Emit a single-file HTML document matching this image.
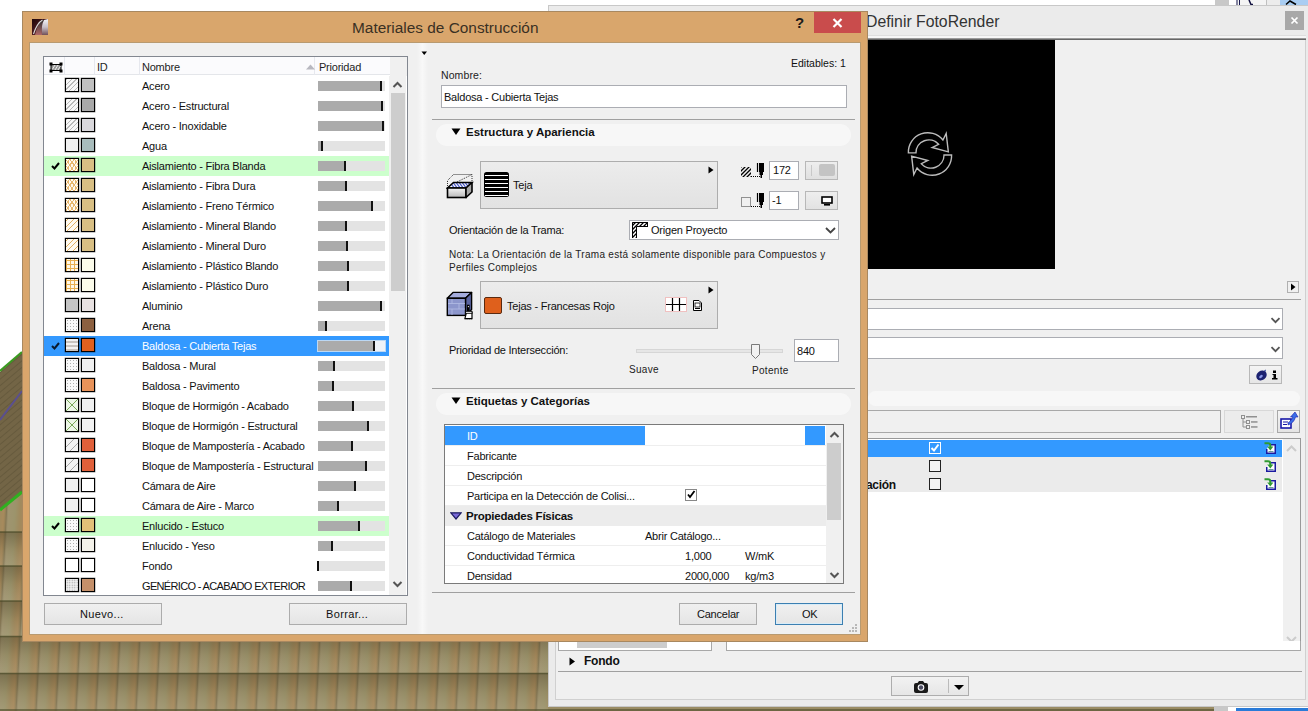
<!DOCTYPE html><html><head><meta charset="utf-8"><style>
*{margin:0;padding:0;box-sizing:border-box}
html,body{width:1308px;height:711px;overflow:hidden;background:#fff;position:relative;font-family:"Liberation Sans",sans-serif;font-size:11px;color:#000}
div{position:absolute}
.t{white-space:nowrap;line-height:14px;letter-spacing:-.22px}
.sw{width:14px;height:14px;border:1px solid #000;box-shadow:0 0 0 0.4px rgba(0,0,0,.5)}
.bar{width:67px;height:10px;background:#e3e3e3}
.bar i{position:absolute;left:0;top:0;height:10px;background:#ababab;display:block}
.bar b{position:absolute;top:0;width:1.6px;height:10px;background:#111;display:block}
.btn{border:1px solid #acacac;background:linear-gradient(#f0f0f0,#e5e5e5);border-radius:0}
.inp{background:#fff;border:1px solid #abadb3}
</style></head><body><svg width="548" height="711" style="position:absolute;left:0;top:0">
<defs>
<linearGradient id="tg" x1="0" x2="1" y1="0" y2="0">
<stop offset="0" stop-color="#7c6e4c"/><stop offset=".1" stop-color="#a09470"/><stop offset=".45" stop-color="#9c946c"/><stop offset=".7" stop-color="#a08a5e"/><stop offset=".9" stop-color="#a88a5c"/><stop offset="1" stop-color="#8e7e56"/>
</linearGradient>
<pattern id="tile" x="12.8" y="0" width="20" height="37" patternUnits="userSpaceOnUse" patternTransform="skewX(-3)">
<rect width="20" height="37" fill="url(#tg)"/>
</pattern>
<pattern id="hip" width="5" height="5" patternUnits="userSpaceOnUse" patternTransform="rotate(-40)">
<rect width="5" height="5" fill="#736546"/>
<rect width="5" height="1" fill="#665a3d"/>
</pattern>
</defs>
<rect x="0" y="0" width="548" height="711" fill="#fff"/>
<rect x="0" y="480" width="548" height="231" fill="url(#tile)"/>
<linearGradient id="rs" x1="0" x2="0" y1="0" y2="1"><stop offset="0" stop-color="#3a3018" stop-opacity=".35"/><stop offset=".5" stop-color="#3a3018" stop-opacity=".08"/><stop offset="1" stop-color="#fff" stop-opacity=".06"/></linearGradient>
<rect x="0" y="532" width="548" height="34" fill="url(#rs)"/><rect x="0" y="566" width="548" height="35" fill="url(#rs)"/><rect x="0" y="601" width="548" height="35.5" fill="url(#rs)"/><rect x="0" y="636.5" width="548" height="37" fill="url(#rs)"/><rect x="0" y="673.5" width="548" height="37" fill="url(#rs)"/>
<g fill="none" stroke="#4a4a28" stroke-width="1.6" opacity=".75">
<path d="M0 532H548M0 566H548M0 601H548M0 636.5H548M0 673.5H548M0 710H548"/>
</g>
<polygon points="0,372 22,352 22,492 0,510" fill="url(#hip)"/>
<line x1="0" y1="371" x2="22" y2="352" stroke="#3a9a20" stroke-width="2.2"/>
<line x1="0" y1="420" x2="22" y2="391" stroke="#5a4f90" stroke-width="2"/>
<line x1="0" y1="510" x2="22" y2="492" stroke="#30b020" stroke-width="3"/>
</svg><svg width="760" height="11" style="position:absolute;left:548px;top:700px"><rect width="760" height="11" fill="#9a8c64"/><path d="M0 10H760" stroke="#4a4a28" stroke-width="1.6" opacity=".75"/></svg><div style="left:1214px;top:705px;width:14px;height:6px;background:#c8c8c8"></div><div style="left:1228px;top:705px;width:80px;height:6px;background:#fff"></div><div style="left:1236px;top:708px;width:72px;height:3px;background:#2a7bd8"></div><div style="left:1215px;top:0px;width:14px;height:5px;background:#c8c8c8"></div><div style="left:1280px;top:0px;width:28px;height:5px;background:#a9cdf2"></div><div style="left:1266px;top:0px;width:14px;height:5px;background:#ececec;border-left:1px solid #c0c0c0"></div><div style="left:1236px;top:0px;width:30px;height:5px;background:#f4f4f4"></div><svg width="72" height="6" style="position:absolute;left:1236px;top:0"><path d="M3.5 0V5M1 0V5" stroke="#1a1a50" stroke-width="1"/><path d="M13 0L15 4.5H17" stroke="#101040" stroke-width="1.5" fill="none"/><path d="M50 4.5L54 1L60 4.5" stroke="#000" stroke-width="1.5" fill="none"/></svg><div style="left:548px;top:5px;width:760px;height:702px;background:#ebebeb;border:1px solid #c8c8c8;border-right:none"></div><div class="t" style="left:866px;top:13px;font-size:15.8px;line-height:18px;color:#333;letter-spacing:0">Definir FotoRender</div><div style="left:1285px;top:11px;width:19px;height:19px;background:#a8a8a8"><svg width="19" height="19" style="position:absolute;left:0;top:0"><path d="M6.5 6.5L12.5 12.5M12.5 6.5L6.5 12.5" stroke="#fff" stroke-width="1.7"/></svg></div><div style="left:555px;top:38px;width:751px;height:662px;background:#f0f0f0;border:1px solid #d0d0d0;border-top:2px solid #777"></div><div style="left:555px;top:35px;width:751px;height:1px;background:#dedede"></div><div style="left:555px;top:36px;width:751px;height:2px;background:#f6f6f6"></div><div style="left:555px;top:38px;width:751px;height:1px;background:#9a9a9a"></div><div style="left:555px;top:39px;width:751px;height:1px;background:#666"></div><div style="left:868px;top:40px;width:187px;height:229px;background:#000"></div><svg width="50" height="50" style="position:absolute;top:130px;left:905px"><g fill="none" stroke="#bbb" stroke-width="1.3" transform="translate(25.2 24.2) scale(1.08) translate(-25.2 -25.2)"><path d="M5 24 A18 18 0 0 1 37 12 L40 6 L42 23 L27 19 L33 16 A12 12 0 0 0 12 24 Z"/><path d="M45 26 A18 18 0 0 1 13 38 L10 44 L8 27 L23 31 L17 34 A12 12 0 0 0 38 26 Z"/></g></svg><div style="left:1287px;top:281px;width:12px;height:12px;border:1px solid #b0b0b0;background:#f0f0f0"><svg width="10" height="10" style="position:absolute;left:0;top:0"><path d="M3 1.5L7.5 5L3 8.5Z" fill="#000"/></svg></div><div style="left:868px;top:299px;width:433px;height:1px;background:#a0a0a0"></div><div style="left:860px;top:308px;width:423px;height:22px;background:#fff;border:1px solid #abadb3"><svg width="11" height="7" style="position:absolute;left:409px;top:8px"><path d="M1.5 1.2L5.5 5.2L9.5 1.2" fill="none" stroke="#555" stroke-width="1.8"/></svg></div><div style="left:860px;top:337px;width:423px;height:22px;background:#fff;border:1px solid #abadb3"><svg width="11" height="7" style="position:absolute;left:409px;top:8px"><path d="M1.5 1.2L5.5 5.2L9.5 1.2" fill="none" stroke="#555" stroke-width="1.8"/></svg></div><div style="left:1249px;top:365px;width:33px;height:19px;border:1px solid #b8b8b8;background:linear-gradient(#f4f4f4,#e6e6e6)"><svg width="33" height="19" style="position:absolute;left:0;top:0"><ellipse cx="11.5" cy="9.5" rx="5.5" ry="4.6" transform="rotate(-35 11.5 9.5)" fill="#1c2270"/><ellipse cx="11" cy="10.5" rx="2" ry="1.3" transform="rotate(-35 11 10.5)" fill="#8a98e8"/><path d="M14 4.5L16 3.5L15.5 6Z" fill="#3a4aa0"/><rect x="23" y="4.5" width="3" height="2.5" fill="#000"/><rect x="23.5" y="8" width="2.5" height="4.5" fill="#000"/><rect x="22" y="12" width="5.5" height="1.5" fill="#000"/><rect x="22.5" y="8" width="1.5" height="1" fill="#000"/></svg></div><div style="left:868px;top:391px;width:432px;height:15px;background:#f7f7f7;border-radius:8px"></div><div style="left:860px;top:410px;width:361px;height:23px;background:#f0f0f0;border:1px solid #a8a8a8"></div><div style="left:1224px;top:410px;width:50px;height:23px;border:1px solid #d8d8d8;background:#ececec"><svg width="50" height="23" style="position:absolute;left:-1px;top:-1px"><g fill="#f0f0f0" stroke="#909090" stroke-width="1"><rect x="17.5" y="5.5" width="3" height="3"/><rect x="22.5" y="10.5" width="3" height="3"/><rect x="22.5" y="15.5" width="3" height="3"/></g><path d="M19 9V17H22M19 12H22" fill="none" stroke="#909090"/><g fill="#909090"><rect x="22" y="6" width="11" height="1.5"/><rect x="27" y="11.2" width="6.5" height="1.5"/><rect x="27" y="16.2" width="6.5" height="1.5"/></g></svg></div><div style="left:1277px;top:410px;width:23px;height:23px;border:1px solid #a8a8a8;background:linear-gradient(#f4f4f4,#e4e4e4)"><svg width="23" height="23" style="position:absolute;left:-1px;top:-1px"><rect x="4" y="9" width="10" height="9" fill="#fff" stroke="#1a1aa8" stroke-width="1.6"/><path d="M6 12h5M6 14.5h4" stroke="#1a1aa8"/><path d="M11 13 Q14 11 16 7 L13.5 7 L18 2 L21 7 L18.5 7 Q17 13 11 15Z" fill="#3a6ee8" stroke="#1a1aa8" stroke-width=".6"/></svg></div><div style="left:860px;top:438px;width:441px;height:213px;background:#fff;border:1px solid #999;border-left:none"></div><div style="left:860px;top:440px;width:422px;height:17px;background:#3399ff"></div><div style="left:860px;top:457px;width:422px;height:35px;background:#ebebeb"></div><div style="left:1283px;top:439px;width:17px;height:211px;background:#f0f0f0"><svg width="17" height="211" style="position:absolute;left:0;top:0"><path d="M4 12L8.5 7.5L13 12" fill="none" stroke="#ccc" stroke-width="2"/><path d="M4 198L8.5 202.5L13 198" fill="none" stroke="#ccc" stroke-width="2"/></svg></div><div class="t" style="left:866px;top:478px;font-weight:bold;font-size:12px;line-height:14px;color:#111;letter-spacing:-.3px">ación</div><div style="left:929px;top:442px;width:12px;height:12px;border:1.5px solid #fff;background:#3399ff"><svg width="10" height="10" style="position:absolute;left:0;top:0"><path d="M1.5 5L4 7.5L8.5 1.5" fill="none" stroke="#fff" stroke-width="2"/></svg></div><svg width="13" height="13" style="position:absolute;left:1264px;top:442px"><path d="M5.5 2.75H11.25V11.25H2.75V7" fill="#fff" stroke="#1a1aa0" stroke-width="1.5"/><path d="M4.5 9.5H9.5" stroke="#6a9a9a"/><path d="M0.5 1.2H4 Q6.3 1.2 6.3 3.5V5" fill="none" stroke="#2f9a30" stroke-width="2"/><path d="M3.2 4.5H9.4L6.3 8.5Z" fill="#2f9a30"/></svg><div style="left:929px;top:460px;width:12px;height:12px;border:1.5px solid #222;background:#f4f4f4"></div><svg width="13" height="13" style="position:absolute;left:1264px;top:460px"><path d="M5.5 2.75H11.25V11.25H2.75V7" fill="#fff" stroke="#1a1aa0" stroke-width="1.5"/><path d="M4.5 9.5H9.5" stroke="#6a9a9a"/><path d="M0.5 1.2H4 Q6.3 1.2 6.3 3.5V5" fill="none" stroke="#2f9a30" stroke-width="2"/><path d="M3.2 4.5H9.4L6.3 8.5Z" fill="#2f9a30"/></svg><div style="left:929px;top:478px;width:12px;height:12px;border:1.5px solid #222;background:#f4f4f4"></div><svg width="13" height="13" style="position:absolute;left:1264px;top:478px"><path d="M5.5 2.75H11.25V11.25H2.75V7" fill="#fff" stroke="#1a1aa0" stroke-width="1.5"/><path d="M4.5 9.5H9.5" stroke="#6a9a9a"/><path d="M0.5 1.2H4 Q6.3 1.2 6.3 3.5V5" fill="none" stroke="#2f9a30" stroke-width="2"/><path d="M3.2 4.5H9.4L6.3 8.5Z" fill="#2f9a30"/></svg><div style="left:558px;top:641px;width:154px;height:10px;background:#fff;border:1px solid #a8a8a8;border-top:none"><div style="left:18px;top:0;width:90px;height:7px;background:#cdcdcd"></div></div><div style="left:726px;top:641px;width:575px;height:10px;background:#fff;border:1px solid #a8a8a8;border-top:none"></div><svg width="8" height="10" style="position:absolute;left:569px;top:657px"><path d="M0.5 0.5L6 4.5L0.5 8.5Z" fill="#000"/></svg><div class="t" style="left:584px;top:654px;font-weight:bold;font-size:12px;line-height:14px;color:#111">Fondo</div><div style="left:558px;top:671px;width:744px;height:1px;background:#a0a0a0"></div><div style="left:891px;top:676px;width:78px;height:20px;border:1px solid #adadad;background:linear-gradient(#f2f2f2,#e6e6e6)"><div style="left:56px;top:2px;width:1px;height:14px;background:#bbb"></div><svg width="78" height="20" style="position:absolute;left:0;top:0"><path d="M22 8 Q22 6 24 6 L25.5 6 L27 4 L31 4 L32.5 6 L34 6 Q36 6 36 8 L36 14 Q36 16 34 16 L24 16 Q22 16 22 14Z" fill="#1a1a1a"/><circle cx="29" cy="10.5" r="3.3" fill="#fff"/><circle cx="29" cy="10.5" r="2.2" fill="#4a4a60"/><path d="M62 8L72 8L67 13Z" fill="#000"/></svg></div><div style="left:22px;top:11px;width:846px;height:631px;background:#d9a66c;border:1px solid #a88860"></div><svg width="16" height="16" style="position:absolute;left:32px;top:19px"><defs><linearGradient id="ic" x1="0" y1="0" x2="1" y2="1"><stop offset="0" stop-color="#1e0608"/><stop offset=".5" stop-color="#4a1a20"/><stop offset="1" stop-color="#6a3030"/></linearGradient><linearGradient id="ic2" x1="0" y1="0" x2="0" y2="1"><stop offset="0" stop-color="#f4f6fa"/><stop offset=".5" stop-color="#c8c0c8"/><stop offset="1" stop-color="#705058"/></linearGradient><linearGradient id="ic3" x1="0" y1="0" x2="0" y2="1"><stop offset="0" stop-color="#303030"/><stop offset="1" stop-color="#b06868"/></linearGradient></defs><rect width="16" height="16" fill="url(#ic)"/><path d="M3 16 Q6 4 9.5 1.5 L12 1 Q9 6 10 16Z" fill="url(#ic3)"/><path d="M10 16 Q9 6 12 1 L16 0 L16 16Z" fill="url(#ic2)"/><path d="M1.5 15 Q5 4 10.5 1" stroke="#d8d8d8" stroke-width="1.1" fill="none"/></svg><div class="t" style="left:352px;top:19px;font-size:15.4px;line-height:18px;color:#3a3023;letter-spacing:0">Materiales de Construcción</div><div class="t" style="left:795px;top:14px;font-weight:bold;font-size:15px;line-height:18px;color:#1a1a1a">?</div><div style="left:814px;top:12px;width:47px;height:21px;background:#c94c4c"><svg width="47" height="21" style="position:absolute;left:0;top:0"><path d="M19.5 7L27.5 15M27.5 7L19.5 15" stroke="#fff" stroke-width="2.2"/></svg></div><div style="left:29px;top:42px;width:832px;height:593px;background:#f0f0f0;border:1px solid #b89a70"></div><div style="left:43px;top:56px;width:365px;height:540px;background:#fff;border:1px solid #828790"></div><div style="left:44px;top:57px;width:346px;height:18px;background:#fbfbfd;border-bottom:1px solid #e4e6ea"></div><div style="left:390px;top:57px;width:17px;height:19px;background:#f0f0f0"></div><div style="left:64px;top:57px;width:1px;height:18px;background:#e6e8ee"></div><div style="left:94px;top:57px;width:1px;height:18px;background:#e6e8ee"></div><div style="left:139px;top:57px;width:1px;height:18px;background:#e6e8ee"></div><div style="left:314px;top:57px;width:1px;height:18px;background:#e6e8ee"></div><svg width="15" height="12" style="position:absolute;left:49px;top:62px"><rect x="2" y="2.5" width="10" height="6" fill="#999" stroke="#000" stroke-width="1"/><path d="M3 8 L6 3 M6 8 L9 3 M9 8 L11.5 4" stroke="#fff" stroke-width=".8"/><rect x="0.5" y="0.5" width="3" height="3" fill="#000"/><rect x="10.5" y="0.5" width="3" height="3" fill="#000"/><rect x="0.5" y="7.5" width="3" height="3" fill="#000"/><rect x="10.5" y="7.5" width="3" height="3" fill="#000"/></svg><div class="t" style="left:97px;top:60px;color:#1e1e1e">ID</div><div class="t" style="left:142px;top:60px;color:#1e1e1e">Nombre</div><svg width="9" height="6" style="position:absolute;left:306px;top:64px"><path d="M0 5.5L4.5 0.5L9 5.5Z" fill="#b8b8c0"/></svg><div class="t" style="left:319px;top:60px;color:#1e1e1e">Prioridad</div><div style="left:0;top:0;width:1308px;height:595px;clip-path:inset(76px 0 0 0)"><div class="sw" style="left:65px;top:78px;width:14px;height:14px;background:#f4f4f4 repeating-linear-gradient(-45deg,#f6f6f6 0 2.5px,#b8b8b8 2.5px 3.3px)"></div><div class="sw" style="left:81px;top:78px;width:14px;height:14px;background:#c0c0c0"></div><div class="t" style="left:142px;top:79px;color:#111">Acero</div><div class="bar" style="left:318px;top:81px;width:67px;height:10px;background:#e3e3e3;"><i style="width:63px;background:#ababab"></i><b style="left:62px"></b></div><div class="sw" style="left:65px;top:98px;width:14px;height:14px;background:#f4f4f4 repeating-linear-gradient(-45deg,#f6f6f6 0 2.5px,#b8b8b8 2.5px 3.3px)"></div><div class="sw" style="left:81px;top:98px;width:14px;height:14px;background:#a9a9a9"></div><div class="t" style="left:142px;top:99px;color:#111">Acero - Estructural</div><div class="bar" style="left:318px;top:101px;width:67px;height:10px;background:#e3e3e3;"><i style="width:64px;background:#ababab"></i><b style="left:63px"></b></div><div class="sw" style="left:65px;top:118px;width:14px;height:14px;background:#f4f4f4 repeating-linear-gradient(-45deg,#f6f6f6 0 2.5px,#b8b8b8 2.5px 3.3px)"></div><div class="sw" style="left:81px;top:118px;width:14px;height:14px;background:#d9d8dc"></div><div class="t" style="left:142px;top:119px;color:#111">Acero - Inoxidable</div><div class="bar" style="left:318px;top:121px;width:67px;height:10px;background:#e3e3e3;"><i style="width:65px;background:#ababab"></i><b style="left:64px"></b></div><div class="sw" style="left:65px;top:138px;width:14px;height:14px;background:#f0f0f0"></div><div class="sw" style="left:81px;top:138px;width:14px;height:14px;background:#a8bcbc"></div><div class="t" style="left:142px;top:139px;color:#111">Agua</div><div class="bar" style="left:318px;top:141px;width:67px;height:10px;background:#e3e3e3;"><i style="width:4px;background:#ababab"></i><b style="left:3px"></b></div><div style="left:44px;top:156px;width:345px;height:20px;background:#ccffcc"></div><svg width="9" height="8" style="position:absolute;left:51px;top:162px"><path d="M1 4L3.5 6.5L8 1" fill="none" stroke="#000" stroke-width="2"/></svg><div class="sw" style="left:65px;top:158px;width:14px;height:14px;background:repeating-linear-gradient(55deg,transparent 0 2.6px,#e8b870 2.6px 3.5px),repeating-linear-gradient(-55deg,#fffaf0 0 2.6px,#e8b870 2.6px 3.5px)"></div><div class="sw" style="left:81px;top:158px;width:14px;height:14px;background:#d8bf84"></div><div class="t" style="left:142px;top:159px;color:#111">Aislamiento - Fibra Blanda</div><div class="bar" style="left:318px;top:161px;width:67px;height:10px;background:#e3e3e3;"><i style="width:27px;background:#ababab"></i><b style="left:26px"></b></div><div class="sw" style="left:65px;top:178px;width:14px;height:14px;background:repeating-linear-gradient(55deg,transparent 0 2.6px,#e8b870 2.6px 3.5px),repeating-linear-gradient(-55deg,#fffaf0 0 2.6px,#e8b870 2.6px 3.5px)"></div><div class="sw" style="left:81px;top:178px;width:14px;height:14px;background:#d8bf84"></div><div class="t" style="left:142px;top:179px;color:#111">Aislamiento - Fibra Dura</div><div class="bar" style="left:318px;top:181px;width:67px;height:10px;background:#e3e3e3;"><i style="width:28px;background:#ababab"></i><b style="left:27px"></b></div><div class="sw" style="left:65px;top:198px;width:14px;height:14px;background:repeating-linear-gradient(55deg,transparent 0 2.6px,#e8b870 2.6px 3.5px),repeating-linear-gradient(-55deg,#fffaf0 0 2.6px,#e8b870 2.6px 3.5px)"></div><div class="sw" style="left:81px;top:198px;width:14px;height:14px;background:#d8bf84"></div><div class="t" style="left:142px;top:199px;color:#111">Aislamiento - Freno Térmico</div><div class="bar" style="left:318px;top:201px;width:67px;height:10px;background:#e3e3e3;"><i style="width:54px;background:#ababab"></i><b style="left:53px"></b></div><div class="sw" style="left:65px;top:218px;width:14px;height:14px;background:#fffaf0 repeating-linear-gradient(-45deg,#fffaf0 0 3.2px,#e2b060 3.2px 4px)"></div><div class="sw" style="left:81px;top:218px;width:14px;height:14px;background:#d8bf84"></div><div class="t" style="left:142px;top:219px;color:#111">Aislamiento - Mineral Blando</div><div class="bar" style="left:318px;top:221px;width:67px;height:10px;background:#e3e3e3;"><i style="width:28px;background:#ababab"></i><b style="left:27px"></b></div><div class="sw" style="left:65px;top:238px;width:14px;height:14px;background:#fffaf0 repeating-linear-gradient(-45deg,#fffaf0 0 3.2px,#e2b060 3.2px 4px)"></div><div class="sw" style="left:81px;top:238px;width:14px;height:14px;background:#d8bf84"></div><div class="t" style="left:142px;top:239px;color:#111">Aislamiento - Mineral Duro</div><div class="bar" style="left:318px;top:241px;width:67px;height:10px;background:#e3e3e3;"><i style="width:29px;background:#ababab"></i><b style="left:28px"></b></div><div class="sw" style="left:65px;top:258px;width:14px;height:14px;background-color:#fff8e6;background-image:repeating-linear-gradient(0deg,transparent 0 3px,#eab050 3px 4px),repeating-linear-gradient(90deg,transparent 0 3px,#eab050 3px 4px);background-position:1px 1px"></div><div class="sw" style="left:81px;top:258px;width:14px;height:14px;background:#fbfbea"></div><div class="t" style="left:142px;top:259px;color:#111">Aislamiento - Plástico Blando</div><div class="bar" style="left:318px;top:261px;width:67px;height:10px;background:#e3e3e3;"><i style="width:30px;background:#ababab"></i><b style="left:29px"></b></div><div class="sw" style="left:65px;top:278px;width:14px;height:14px;background-color:#fff8e6;background-image:repeating-linear-gradient(0deg,transparent 0 3px,#eab050 3px 4px),repeating-linear-gradient(90deg,transparent 0 3px,#eab050 3px 4px);background-position:1px 1px"></div><div class="sw" style="left:81px;top:278px;width:14px;height:14px;background:#fbfbea"></div><div class="t" style="left:142px;top:279px;color:#111">Aislamiento - Plástico Duro</div><div class="bar" style="left:318px;top:281px;width:67px;height:10px;background:#e3e3e3;"><i style="width:30px;background:#ababab"></i><b style="left:29px"></b></div><div class="sw" style="left:65px;top:298px;width:14px;height:14px;background:#c4c4c4"></div><div class="sw" style="left:81px;top:298px;width:14px;height:14px;background:#e8e2e2"></div><div class="t" style="left:142px;top:299px;color:#111">Aluminio</div><div class="bar" style="left:318px;top:301px;width:67px;height:10px;background:#e3e3e3;"><i style="width:63px;background:#ababab"></i><b style="left:62px"></b></div><div class="sw" style="left:65px;top:318px;width:14px;height:14px;background:#f8f8f8 radial-gradient(circle,#b0b0b0 0.6px,transparent 0.9px) 0 0/3px 3px"></div><div class="sw" style="left:81px;top:318px;width:14px;height:14px;background:#8c6040"></div><div class="t" style="left:142px;top:319px;color:#111">Arena</div><div class="bar" style="left:318px;top:321px;width:67px;height:10px;background:#e3e3e3;"><i style="width:8px;background:#ababab"></i><b style="left:7px"></b></div><div style="left:44px;top:336px;width:345px;height:20px;background:#3399ff"></div><svg width="9" height="8" style="position:absolute;left:51px;top:342px"><path d="M1 4L3.5 6.5L8 1" fill="none" stroke="#0a1a30" stroke-width="2"/></svg><div class="sw" style="left:65px;top:338px;width:14px;height:14px;background:repeating-linear-gradient(0deg,#c8c4c0 0 2px,#f2f2f2 2px 4px)"></div><div class="sw" style="left:81px;top:338px;width:14px;height:14px;background:#e0601e"></div><div class="t" style="left:142px;top:339px;color:#fff">Baldosa - Cubierta Tejas</div><div class="bar" style="left:318px;top:341px;width:67px;height:10px;background:#eef2f8;box-shadow:0 0 0 1px #bcd8f4;"><i style="width:56px;background:#ababab"></i><b style="left:55px"></b></div><div class="sw" style="left:65px;top:358px;width:14px;height:14px;background:#f8f8f8 radial-gradient(circle,#b0b0b0 0.6px,transparent 0.9px) 0 0/3px 3px"></div><div class="sw" style="left:81px;top:358px;width:14px;height:14px;background:#f0f0f0"></div><div class="t" style="left:142px;top:359px;color:#111">Baldosa - Mural</div><div class="bar" style="left:318px;top:361px;width:67px;height:10px;background:#e3e3e3;"><i style="width:16px;background:#ababab"></i><b style="left:15px"></b></div><div class="sw" style="left:65px;top:378px;width:14px;height:14px;background:#f8f8f8 radial-gradient(circle,#b0b0b0 0.6px,transparent 0.9px) 0 0/3px 3px"></div><div class="sw" style="left:81px;top:378px;width:14px;height:14px;background:#e8935a"></div><div class="t" style="left:142px;top:379px;color:#111">Baldosa - Pavimento</div><div class="bar" style="left:318px;top:381px;width:67px;height:10px;background:#e3e3e3;"><i style="width:15px;background:#ababab"></i><b style="left:14px"></b></div><div class="sw" style="left:65px;top:398px;width:14px;height:14px;background:linear-gradient(45deg,transparent 46.5%,#7aa858 46.5% 53.5%,transparent 53.5%),linear-gradient(-45deg,transparent 46.5%,#7aa858 46.5% 53.5%,transparent 53.5%),#ecf6e6"></div><div class="sw" style="left:81px;top:398px;width:14px;height:14px;background:#f0f0f0"></div><div class="t" style="left:142px;top:399px;color:#111">Bloque de Hormigón - Acabado</div><div class="bar" style="left:318px;top:401px;width:67px;height:10px;background:#e3e3e3;"><i style="width:35px;background:#ababab"></i><b style="left:34px"></b></div><div class="sw" style="left:65px;top:418px;width:14px;height:14px;background:linear-gradient(45deg,transparent 46.5%,#7aa858 46.5% 53.5%,transparent 53.5%),linear-gradient(-45deg,transparent 46.5%,#7aa858 46.5% 53.5%,transparent 53.5%),#ecf6e6"></div><div class="sw" style="left:81px;top:418px;width:14px;height:14px;background:#f2f2f2"></div><div class="t" style="left:142px;top:419px;color:#111">Bloque de Hormigón - Estructural</div><div class="bar" style="left:318px;top:421px;width:67px;height:10px;background:#e3e3e3;"><i style="width:50px;background:#ababab"></i><b style="left:49px"></b></div><div class="sw" style="left:65px;top:438px;width:14px;height:14px;background:#f2f2f2 repeating-linear-gradient(-45deg,#f2f2f2 0 5px,#a8a8a8 5px 6px)"></div><div class="sw" style="left:81px;top:438px;width:14px;height:14px;background:#e0603a"></div><div class="t" style="left:142px;top:439px;color:#111">Bloque de Mampostería - Acabado</div><div class="bar" style="left:318px;top:441px;width:67px;height:10px;background:#e3e3e3;"><i style="width:34px;background:#ababab"></i><b style="left:33px"></b></div><div class="sw" style="left:65px;top:458px;width:14px;height:14px;background:#f2f2f2 repeating-linear-gradient(-45deg,#f2f2f2 0 5px,#a8a8a8 5px 6px)"></div><div class="sw" style="left:81px;top:458px;width:14px;height:14px;background:#e0603a"></div><div class="t" style="left:142px;top:459px;color:#111">Bloque de Mampostería - Estructural</div><div class="bar" style="left:318px;top:461px;width:67px;height:10px;background:#e3e3e3;"><i style="width:48px;background:#ababab"></i><b style="left:47px"></b></div><div class="sw" style="left:65px;top:478px;width:14px;height:14px;background:#f0f0f0"></div><div class="sw" style="left:81px;top:478px;width:14px;height:14px;background:#fff"></div><div class="t" style="left:142px;top:479px;color:#111">Cámara de Aire</div><div class="bar" style="left:318px;top:481px;width:67px;height:10px;background:#e3e3e3;"><i style="width:37px;background:#ababab"></i><b style="left:36px"></b></div><div class="sw" style="left:65px;top:498px;width:14px;height:14px;background:#f0f0f0"></div><div class="sw" style="left:81px;top:498px;width:14px;height:14px;background:#fff"></div><div class="t" style="left:142px;top:499px;color:#111">Cámara de Aire - Marco</div><div class="bar" style="left:318px;top:501px;width:67px;height:10px;background:#e3e3e3;"><i style="width:20px;background:#ababab"></i><b style="left:19px"></b></div><div style="left:44px;top:516px;width:345px;height:20px;background:#ccffcc"></div><svg width="9" height="8" style="position:absolute;left:51px;top:522px"><path d="M1 4L3.5 6.5L8 1" fill="none" stroke="#000" stroke-width="2"/></svg><div class="sw" style="left:65px;top:518px;width:14px;height:14px;background:#f8f8f8 radial-gradient(circle,#b0b0b0 0.6px,transparent 0.9px) 0 0/3px 3px"></div><div class="sw" style="left:81px;top:518px;width:14px;height:14px;background:#e2c078"></div><div class="t" style="left:142px;top:519px;color:#111">Enlucido - Estuco</div><div class="bar" style="left:318px;top:521px;width:67px;height:10px;background:#e3e3e3;"><i style="width:41px;background:#ababab"></i><b style="left:40px"></b></div><div class="sw" style="left:65px;top:538px;width:14px;height:14px;background:#f8f8f8 radial-gradient(circle,#b0b0b0 0.6px,transparent 0.9px) 0 0/3px 3px"></div><div class="sw" style="left:81px;top:538px;width:14px;height:14px;background:#f4f2ea"></div><div class="t" style="left:142px;top:539px;color:#111">Enlucido - Yeso</div><div class="bar" style="left:318px;top:541px;width:67px;height:10px;background:#e3e3e3;"><i style="width:14px;background:#ababab"></i><b style="left:13px"></b></div><div class="sw" style="left:65px;top:558px;width:14px;height:14px;background:#fff"></div><div class="sw" style="left:81px;top:558px;width:14px;height:14px;background:#fff"></div><div class="t" style="left:142px;top:559px;color:#111">Fondo</div><div class="bar" style="left:318px;top:561px;width:67px;height:10px;background:#e3e3e3;"><i style="width:0px;background:#ababab"></i><b style="left:-1px"></b></div><div class="sw" style="left:65px;top:578px;width:14px;height:14px;background:#eeeeee radial-gradient(circle,#a0a0a0 0.6px,transparent 0.9px) 0 0/2.5px 2.5px"></div><div class="sw" style="left:81px;top:578px;width:14px;height:14px;background:#c4906a"></div><div class="t" style="left:142px;top:579px;color:#111;letter-spacing:-.66px">GENÉRICO - ACABADO EXTERIOR</div><div class="bar" style="left:318px;top:581px;width:67px;height:10px;background:#e3e3e3;"><i style="width:33px;background:#ababab"></i><b style="left:32px"></b></div></div><div style="left:389px;top:76px;width:17px;height:519px;background:#f0f0f0"></div><svg width="17" height="20" style="position:absolute;left:389px;top:76px"><path d="M4.5 11L8.5 7L12.5 11" fill="none" stroke="#555" stroke-width="2"/></svg><div style="left:391px;top:93px;width:14px;height:198px;background:#cdcdcd"></div><svg width="17" height="20" style="position:absolute;left:389px;top:575px"><path d="M4.5 7L8.5 11L12.5 7" fill="none" stroke="#555" stroke-width="2"/></svg><div class="btn" style="left:44px;top:603px;width:118px;height:22px;"></div><div class="t" style="left:80px;top:607px;color:#111;letter-spacing:.35px">Nuevo...</div><div class="btn" style="left:289px;top:603px;width:118px;height:22px;"></div><div class="t" style="left:326px;top:607px;color:#111;letter-spacing:.35px">Borrar...</div><div style="left:417px;top:43px;width:11px;height:591px;background:linear-gradient(90deg,#f0f0f0,#f8f8f8 50%,#f0f0f0)"></div><svg width="7" height="5" style="position:absolute;left:421px;top:51px"><path d="M0.5 0.5L6 0.5L3.25 4Z" fill="#000"/></svg><div class="t" style="left:791px;top:56px;font-size:10.5px;color:#111;letter-spacing:0">Editables: 1</div><div class="t" style="left:441px;top:68px;font-size:10.5px;color:#222;letter-spacing:.1px">Nombre:</div><div style="left:441px;top:85px;width:406px;height:23px;background:#fff;border:1px solid #abadb3"></div><div class="t" style="left:444px;top:90px;color:#111">Baldosa - Cubierta Tejas</div><div style="left:432px;top:119px;width:423px;height:1px;background:#a0a0a0"></div><div style="left:436px;top:124px;width:415px;height:22px;background:#f7f7f7;border-radius:11px"></div><svg width="10" height="8" style="position:absolute;left:451px;top:128px"><path d="M0.5 0.5L9.5 0.5L5 7Z" fill="#000"/></svg><div class="t" style="left:466px;top:125px;font-weight:bold;font-size:11.5px;color:#111;letter-spacing:0">Estructura y Apariencia</div><div style="left:480px;top:161px;width:238px;height:48px;border:1px solid #adadad;background:linear-gradient(#ececec,#e2e2e2)"></div><svg width="6" height="8" style="position:absolute;left:708px;top:166px"><path d="M0.5 0.5L5.5 4L0.5 7.5Z" fill="#000"/></svg><svg width="25" height="25" style="position:absolute;left:484px;top:172px"><rect x="0" y="0" width="25" height="25" rx="2.5" fill="#000"/><g fill="#fff"><rect x="1" y="3" width="23" height="1"/><rect x="1" y="7" width="23" height="1"/><rect x="1" y="11" width="23" height="1"/><rect x="1" y="15" width="23" height="1"/><rect x="1" y="19" width="23" height="1"/><rect x="1" y="23" width="23" height="1"/></g></svg><div class="t" style="left:513px;top:178px;color:#111">Teja</div><svg width="28" height="27" style="position:absolute;left:446px;top:172px"><defs><linearGradient id="fg" x1="0" y1="0" x2="0" y2="1"><stop offset="0" stop-color="#f4f4f4"/><stop offset="1" stop-color="#b8b8b8"/></linearGradient><clipPath id="tf"><path d="M1.5 16L7.5 10.5H26L20 16Z"/></clipPath></defs><path d="M1.5 16V8.5L7.5 2.5H26V10.5M11 10L26 2.5" fill="none" stroke="#333" stroke-width="1" stroke-dasharray="1 1"/><path d="M1.5 16L7.5 10.5H26L20 16Z" fill="#fff"/><g clip-path="url(#tf)" stroke="#5060c8" stroke-width="1.3"><path d="M3 9L9 17M6 9L12 17M9 9L15 17M12 9L18 17M15 9L21 17M18 9L24 17M21 9L27 17M24 9L30 17"/></g><path d="M1.5 16L7.5 10.5H26L20 16Z" fill="none" stroke="#000" stroke-width="1.6"/><rect x="1.5" y="16" width="18.5" height="9.5" fill="url(#fg)" stroke="#000" stroke-width="1.6"/><path d="M20 16L26 10.5V20L20 25.5Z" fill="#a8a8a8" stroke="#000" stroke-width="1.6" stroke-linejoin="round"/></svg><svg width="26" height="17" style="position:absolute;left:740px;top:162px"><defs><clipPath id="hc"><rect x="1" y="5" width="10" height="10"/></clipPath></defs><g clip-path="url(#hc)"><path d="M-2 8L4 2M-2 12L8 2M-2 16L12 2M2 16L12 6M6 16L12 10M10 16L14 12" stroke="#000" stroke-width="1.3"/></g><path d="M11 14.5H21" stroke="#000" stroke-dasharray="1 1"/><path d="M17.5 1V10" stroke="#000" stroke-width="1.2"/><rect x="19" y="1" width="5" height="9" fill="#000"/><rect x="19.5" y="10" width="3.5" height="3" fill="#000"/><rect x="20.5" y="12" width="1.5" height="4" fill="#000"/></svg><svg width="26" height="17" style="position:absolute;left:740px;top:192px"><rect x="1.5" y="5.5" width="9" height="9" fill="none" stroke="#333" stroke-dasharray="1 1"/><path d="M11 14.5H21" stroke="#000" stroke-dasharray="1 1"/><path d="M17.5 1V10" stroke="#000" stroke-width="1.2"/><rect x="19" y="1" width="5" height="9" fill="#000"/><rect x="19.5" y="10" width="3.5" height="3" fill="#000"/><rect x="20.5" y="12" width="1.5" height="4" fill="#000"/></svg><div style="left:769px;top:161px;width:30px;height:19px;background:#fff;border:1px solid #abadb3"></div><div class="t" style="left:773px;top:163px;color:#111">172</div><div style="left:769px;top:191px;width:30px;height:19px;background:#fff;border:1px solid #abadb3"></div><div class="t" style="left:772px;top:193px;color:#111">-1</div><div style="left:805px;top:161px;width:33px;height:19px;border:1px solid #b8b8b8;background:linear-gradient(#eeeeee,#e0e0e0)"><div style="left:5px;top:3px;width:1px;height:11px;background:#c8c8c8"></div><div style="left:13px;top:2px;width:16px;height:12px;background:#c4c4c4;border-radius:2px"></div></div><div style="left:805px;top:191px;width:33px;height:19px;border:1px solid #b8b8b8;background:linear-gradient(#eeeeee,#e2e2e2)"><svg width="12" height="10" style="position:absolute;left:15px;top:4px"><rect x="1" y="1" width="10" height="6" fill="#fff" stroke="#000" stroke-width="1.6"/><rect x="3" y="8" width="6" height="1.6" fill="#000"/></svg></div><div class="t" style="left:449px;top:223px;color:#111">Orientación de la Trama:</div><div style="left:629px;top:220px;width:210px;height:20px;background:#fff;border:1px solid #abadb3"></div><svg width="16" height="16" style="position:absolute;left:632px;top:222px"><defs><clipPath id="cl"><path d="M0 0H16V5H5V16H0Z"/></clipPath></defs><g clip-path="url(#cl)"><rect width="16" height="16" fill="#fff"/><path d="M-4 8L8 -4M-4 12L12 -4M-4 16L16 -4M-4 20L20 -4M-4 4L4 -4M0 20L20 0" stroke="#000" stroke-width="1.3"/></g><path d="M0.5 15.5V0.5H15.5V5M4.5 15.5V4.5H15.5" fill="none" stroke="#000"/></svg><div class="t" style="left:651px;top:223px;color:#111">Origen Proyecto</div><svg width="11" height="7" style="position:absolute;left:825px;top:227px"><path d="M1 1L5.5 5.5L10 1" fill="none" stroke="#444" stroke-width="1.8"/></svg><div class="t" style="left:449px;top:248px;font-size:10px;letter-spacing:.28px;color:#222">Nota: La Orientación de la Trama está solamente disponible para Compuestos y</div><div class="t" style="left:449px;top:261px;font-size:10px;letter-spacing:.28px;color:#222">Perfiles Complejos</div><div style="left:480px;top:281px;width:238px;height:48px;border:1px solid #adadad;background:linear-gradient(#ececec,#e2e2e2)"></div><svg width="6" height="8" style="position:absolute;left:708px;top:286px"><path d="M0.5 0.5L5.5 4L0.5 7.5Z" fill="#000"/></svg><div style="left:484px;top:297px;width:18px;height:17px;background:#df601c;border:1px solid #5a2a10;border-radius:2px"></div><div class="t" style="left:507px;top:299px;color:#111">Tejas - Francesas Rojo</div><svg width="22" height="15" style="position:absolute;left:665px;top:297px"><rect x="0.5" y="0.5" width="21" height="14" fill="#fff" stroke="#f0c0c0"/><path d="M1 7.5H21M7.5 1V14M14.5 1V14" stroke="#000" stroke-width="1.2"/></svg><svg width="9" height="11" style="position:absolute;left:693px;top:300px"><path d="M0.5 0.5H6L8.5 3V10.5H0.5Z" fill="#fff" stroke="#000"/><rect x="2" y="3" width="5" height="4" fill="none" stroke="#000" stroke-width=".8"/><path d="M2 8.5H7" stroke="#000"/></svg><svg width="28" height="29" style="position:absolute;left:446px;top:291px"><path d="M1.3 7.3L7 1.4H25.6L19.5 7.3Z" fill="#a4acdc" stroke="#000" stroke-width="1.4" stroke-linejoin="round"/><path d="M19.5 7.3L25.6 1.4V18.5L19.5 24.4Z" fill="#5a64a0" stroke="#000" stroke-width="1.4" stroke-linejoin="round"/><rect x="1.3" y="7.3" width="18.2" height="17.1" fill="#8c96cc" stroke="#000" stroke-width="1.4"/><path d="M2 12.5H19M2 18H19M6 8V12.5M13 12.5V18M6 18V24" stroke="#b4bce4" stroke-width=".8"/><path d="M20.5 21.3H26V27.6H18.9Z" fill="#fff" stroke="#000" stroke-width="1.2"/><rect x="21" y="13.7" width="2.6" height="7" fill="#000"/><rect x="21.9" y="15" width=".9" height="1.2" fill="#fff"/><rect x="19.5" y="20.3" width="6.5" height="2" fill="#fff" stroke="#000" stroke-width=".9"/><path d="M19.5 27.6H26.5" stroke="#000" stroke-width="1.3" stroke-dasharray="1 .8"/></svg><div class="t" style="left:449px;top:343px;color:#111">Prioridad de Intersección:</div><div style="left:636px;top:349px;width:147px;height:4px;background:#e6e6e6;border:1px solid #d6d6d6"></div><svg width="10" height="16" style="position:absolute;left:751px;top:344px"><path d="M0.5 0.5H8.5V10.5L4.5 14.5L0.5 10.5Z" fill="#f2f2f2" stroke="#7a7a7a"/></svg><div style="left:794px;top:339px;width:45px;height:23px;background:#fff;border:1px solid #abadb3"></div><div class="t" style="left:797px;top:344px;color:#111">840</div><div class="t" style="left:629px;top:363px;font-size:10px;letter-spacing:.3px;color:#222">Suave</div><div class="t" style="left:752px;top:364px;font-size:10px;letter-spacing:.3px;color:#222">Potente</div><div style="left:432px;top:388px;width:423px;height:1px;background:#a0a0a0"></div><div style="left:436px;top:393px;width:415px;height:22px;background:#f7f7f7;border-radius:11px"></div><svg width="10" height="8" style="position:absolute;left:451px;top:397px"><path d="M0.5 0.5L9.5 0.5L5 7Z" fill="#000"/></svg><div class="t" style="left:466px;top:394px;font-weight:bold;font-size:11.5px;color:#111;letter-spacing:0">Etiquetas y Categorías</div><div style="left:444px;top:424px;width:400px;height:160px;background:#fff;border:1px solid #7a7a7a"></div><div style="left:445px;top:426px;width:200px;height:19px;background:#3399ff"></div><div style="left:805px;top:426px;width:20px;height:19px;background:#3399ff"></div><div style="left:445px;top:445px;width:381px;height:1px;background:#eeeeee"></div><div style="left:445px;top:465px;width:381px;height:1px;background:#eeeeee"></div><div style="left:445px;top:485px;width:381px;height:1px;background:#eeeeee"></div><div style="left:445px;top:505px;width:381px;height:1px;background:#eeeeee"></div><div style="left:445px;top:525px;width:381px;height:1px;background:#eeeeee"></div><div style="left:445px;top:545px;width:381px;height:1px;background:#eeeeee"></div><div style="left:445px;top:565px;width:381px;height:1px;background:#eeeeee"></div><div style="left:445px;top:506px;width:381px;height:20px;background:#ececec"></div><div class="t" style="left:467px;top:429px;color:#fff">ID</div><div class="t" style="left:467px;top:449px;color:#111">Fabricante</div><div class="t" style="left:467px;top:469px;color:#111">Descripción</div><div class="t" style="left:467px;top:489px;color:#111">Participa en la Detección de Colisi...</div><svg width="12" height="8" style="position:absolute;left:450px;top:512px"><path d="M0.8 0.8H11.2L6 7Z" fill="#7a6ad8" stroke="#1a1a60" stroke-width="1.2"/></svg><div class="t" style="left:466px;top:509px;font-weight:bold;font-size:11.5px;color:#111">Propiedades Físicas</div><div class="t" style="left:467px;top:529px;color:#111">Catálogo de Materiales</div><div class="t" style="left:645px;top:529px;color:#111">Abrir Catálogo...</div><div class="t" style="left:467px;top:549px;color:#111">Conductividad Térmica</div><div class="t" style="left:685px;top:549px;color:#111">1,000</div><div class="t" style="left:745px;top:549px;color:#111">W/mK</div><div class="t" style="left:467px;top:569px;color:#111">Densidad</div><div class="t" style="left:685px;top:569px;color:#111">2000,000</div><div class="t" style="left:745px;top:569px;color:#111">kg/m3</div><div style="left:685px;top:489px;width:12px;height:12px;border:1px solid #888;background:#fff"><svg width="10" height="10" style="position:absolute;left:0;top:0"><path d="M2 4.5L4 7L8.5 1" fill="none" stroke="#000" stroke-width="1.8"/></svg></div><div style="left:826px;top:425px;width:17px;height:158px;background:#f0f0f0"></div><svg width="17" height="20" style="position:absolute;left:826px;top:426px"><path d="M4.5 11L8.5 7L12.5 11" fill="none" stroke="#555" stroke-width="2"/></svg><div style="left:827px;top:443px;width:14px;height:77px;background:#cdcdcd"></div><svg width="17" height="20" style="position:absolute;left:826px;top:566px"><path d="M4.5 7L8.5 11L12.5 7" fill="none" stroke="#555" stroke-width="2"/></svg><div style="left:432px;top:592px;width:423px;height:1px;background:#a0a0a0"></div><div class="btn" style="left:679px;top:603px;width:78px;height:22px;"></div><div class="t" style="left:697px;top:607px;color:#111">Cancelar</div><div class="btn" style="left:775px;top:603px;width:68px;height:22px;border-color:#3c7fb1;box-shadow:inset 0 0 0 1px #d8ecf8"></div><div class="t" style="left:802px;top:607px;color:#111">OK</div><svg width="10" height="10" style="position:absolute;left:848px;top:623px"><g fill="#b8b8b8"><rect x="7" y="1" width="2" height="2"/><rect x="4" y="4" width="2" height="2"/><rect x="7" y="4" width="2" height="2"/><rect x="1" y="7" width="2" height="2"/><rect x="4" y="7" width="2" height="2"/><rect x="7" y="7" width="2" height="2"/></g></svg></body></html>
